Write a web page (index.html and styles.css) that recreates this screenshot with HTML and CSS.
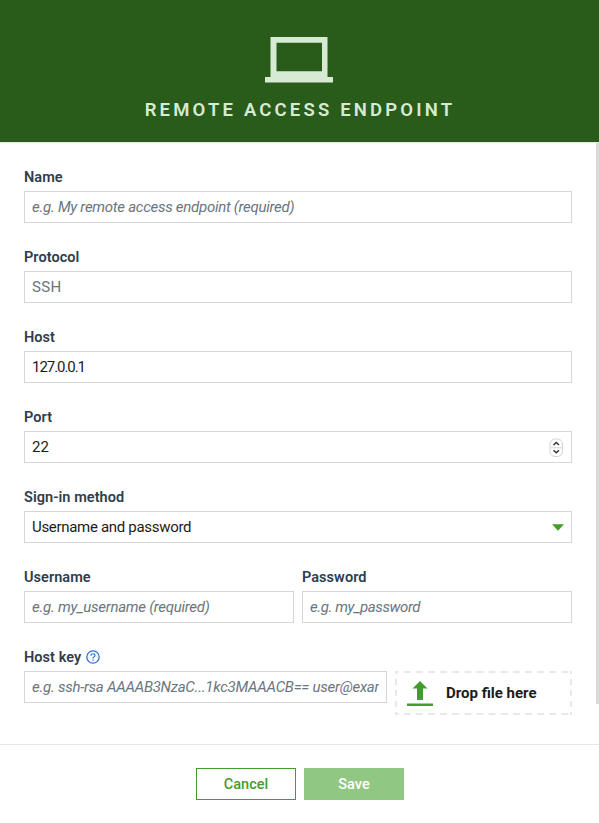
FILE: index.html
```html
<!DOCTYPE html>
<html lang="en">
<head>
<meta charset="utf-8">
<title>Remote access endpoint</title>
<link rel="stylesheet" href="styles.css">
</head>
<body>
<div class="drawer">
  <header class="header">
    <svg class="laptop" width="68" height="46" viewBox="0 0 68 46" fill="#d7ebd4"><path fill-rule="evenodd" d="M5.500 0H62.500V40H68V45.500H0V40H5.500ZM11.500 5.700V34.300H57V5.700Z"/></svg>
    <h1 class="title">Remote access endpoint</h1>
  </header>
  <main class="form">
    <div class="field">
      <label class="label" for="name">Name</label>
      <input class="input name-input" id="name" placeholder="e.g. My remote access endpoint (required)">
    </div>
    <div class="field">
      <label class="label" for="protocol">Protocol</label>
      <input class="input protocol-input" id="protocol" value="SSH" disabled>
    </div>
    <div class="field">
      <label class="label" for="host">Host</label>
      <input class="input host-input" id="host" value="127.0.0.1">
    </div>
    <div class="field">
      <label class="label" for="port">Port</label>
      <div class="input with-icon"><span id="port">22</span>
        <svg class="spinner" width="15" height="20" viewBox="0 0 15 20"><rect x="1" y="1" width="12.500" height="17.500" rx="5" fill="#fff" stroke="#d2d2d2"/><path d="M1.500 9.750H13" stroke="#e2e2e2" stroke-width="1.500"/><path d="M4.500 7 7.250 4.500 10 7M4.500 12.300 7.250 14.800 10 12.300" fill="none" stroke="#333" stroke-width="1.500"/></svg>
      </div>
    </div>
    <div class="field">
      <label class="label">Sign-in method</label>
      <div class="input with-icon select"><span>Username and password</span>
        <svg class="caret" width="12" height="7" viewBox="0 0 12 7"><path d="M0 .3H12L6 6.700Z" fill="#459c2e"/></svg>
      </div>
    </div>
    <div class="row">
      <div class="field">
        <label class="label" for="username">Username</label>
        <input class="input username-input" id="username" placeholder="e.g. my_username (required)">
      </div>
      <div class="field">
        <label class="label" for="password">Password</label>
        <input class="input password-input" id="password" placeholder="e.g. my_password">
      </div>
    </div>
    <div class="row key-row">
      <div class="field">
        <label class="label" for="key"><span>Host key</span><svg class="help" width="14" height="14" viewBox="0 0 14 14" fill="none" stroke="#2f72db"><circle cx="7" cy="7" r="6.200" stroke-width="1.300"/><path d="M5 5.700C5 3.100 9 3.200 9 5.500C9 6.900 7 6.800 7 8.400" stroke-width="1.200"/><path d="M7 9.500V10.700" stroke-width="1.300"/></svg></label>
        <input class="input key-input" id="key" placeholder="e.g. ssh-rsa AAAAB3NzaC...1kc3MAAACB== user@example.com">
      </div>
      <div class="drop">
        <svg class="dashes" width="177" height="44" fill="none"><path d="M0 1H177M0 43H177" stroke="#e6e9eb" stroke-width="2" stroke-dasharray="7 5.140" stroke-dashoffset="3.500"/><path d="M1 0V44M176 0V44" stroke="#e6e9eb" stroke-width="2" stroke-dasharray="6 5" stroke-dashoffset="3"/></svg>
        <svg class="upload" width="26" height="26" viewBox="0 0 26 26" fill="#459c2e"><path d="M13 0 20.500 7.500H16V19H10V7.500H5.500ZM0 22.500H26V25H0Z"/></svg>
        <span class="drop-text">Drop file here</span>
      </div>
    </div>
    <div class="scrollbar"></div>
  </main>
  <footer class="footer">
    <button class="button">Cancel</button>
    <button class="button primary">Save</button>
  </footer>
</div>
</body>
</html>
```
FILE: styles.css
```css
* { box-sizing: border-box; }
body { margin: 0; background: #fff; font-family: Roboto, "Liberation Sans", sans-serif; font-size: 15px; color: #1b1b1b; }
.drawer { height: 823px; display: flex; flex-direction: column; overflow: hidden; }
.header { height: 142px; flex: none; background: #295c1b; color: #d7ebd4; display: flex; flex-direction: column; align-items: center; padding: 37px 1px 0 0; }
.laptop { display: block; }
.title { margin: 15px -2px 0 0; font-size: 18.500px; line-height: 24px; font-weight: 600; text-transform: uppercase; letter-spacing: 3.180px; }
.form { position: relative; height: 602px; flex: none; padding: 24px 27px 0 24px; border-top: 1px solid #e8e8e8; display: flex; flex-direction: column; gap: 24px; }
.field { display: flex; flex-direction: column; min-width: 0; }
.label { height: 21px; line-height: 20px; padding-top: 1px; margin-bottom: 3px; font-size: 14.500px; font-weight: 600; color: #2f3d4b; display: flex; align-items: center; letter-spacing: .050px; }
.input { width: 100%; height: 32px; border: 1px solid #d4d6da; border-radius: 0; padding: 0 7px; background: #fff; font: 400 15px/30px Roboto, "Liberation Sans", sans-serif; color: #1b1b1b; outline: 0; }
.input:disabled { color: #69757f; -webkit-text-fill-color: #69757f; }
.input::placeholder { font-style: italic; color: #69757f; opacity: 1; }
.name-input, .username-input { letter-spacing: -.270px; }
.protocol-input { letter-spacing: .3px; }
.host-input { letter-spacing: -1.050px; }
.select { letter-spacing: -.310px; }
.password-input { letter-spacing: -.420px; }
.key-input { letter-spacing: -.260px; }
.with-icon { display: flex; align-items: center; justify-content: space-between; }
.spinner { margin-top: 2px; }
.row { display: grid; grid-template-columns: 1fr 1fr; gap: 8px; }
.key-row { grid-template-columns: 363px 177px; align-items: start; }
.help { margin: 0 0 2px 5px; }
.drop { position: relative; height: 44px; margin-top: 24px; display: flex; align-items: center; padding-left: 12px; gap: 13px; }
.dashes { position: absolute; inset: 0; }
.upload { margin-top: 1px; }
.drop-text { font-size: 15px; font-weight: 700; }
.scrollbar { position: absolute; top: 0; right: 0; width: 3px; height: 561px; background: #d8dadc; }
.footer { flex: 1; border-top: 1px solid #e6e7e8; padding-top: 23px; display: flex; justify-content: center; align-items: flex-start; gap: 8px; padding-left: 1px; }
.button { width: 100px; height: 32px; padding: 1px 0 0; border: 1px solid #459c2e; background: #fff; color: #459c2e; font: 500 14.500px/29px Roboto, "Liberation Sans", sans-serif; }
.primary { border-color: #8fc783; background: #8fc783; color: #fff; }
```
